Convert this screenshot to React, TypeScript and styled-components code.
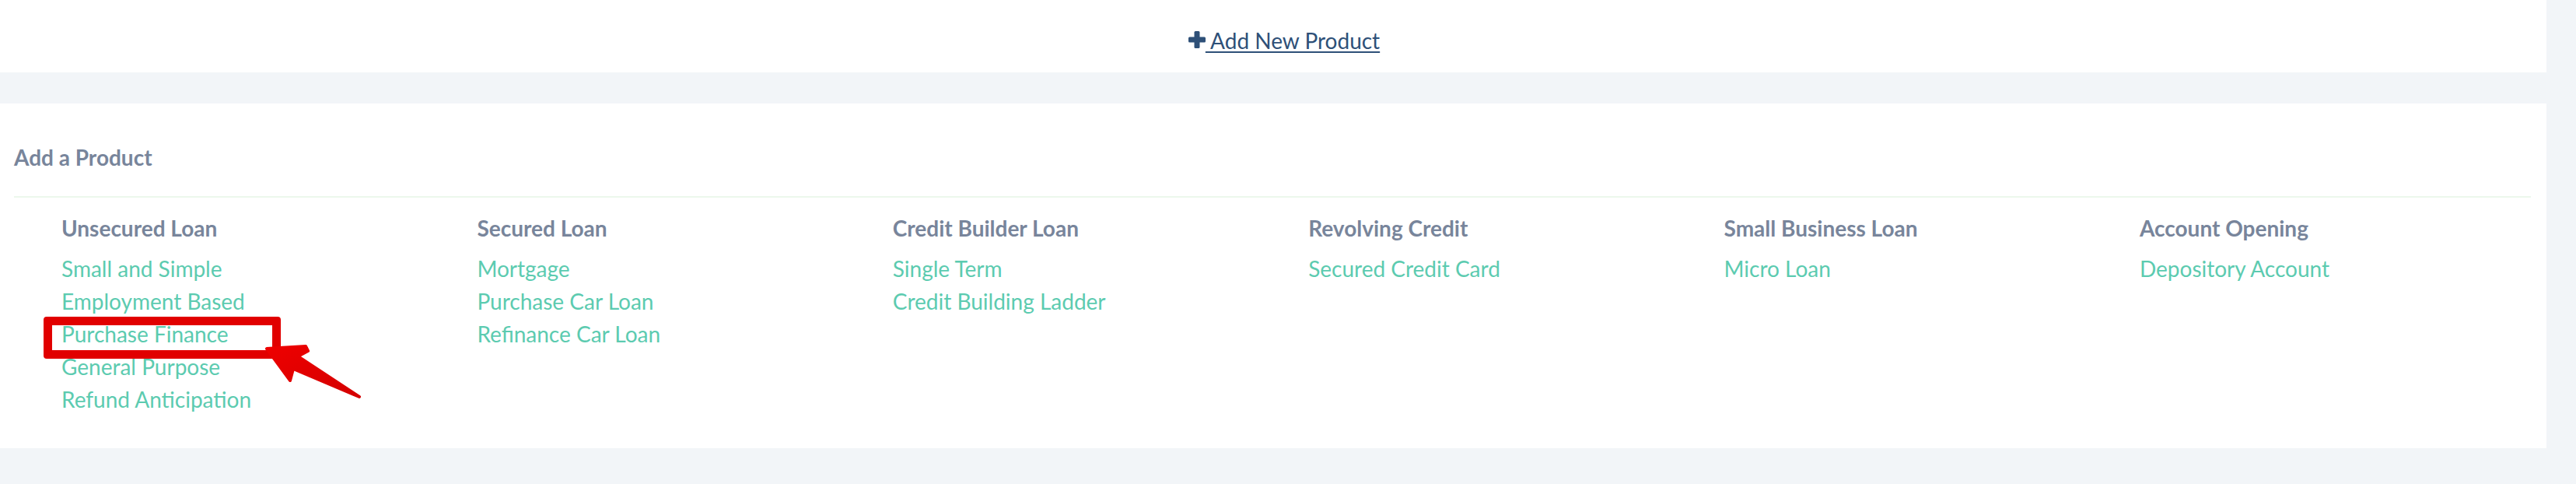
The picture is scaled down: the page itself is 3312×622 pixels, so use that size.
import React from "react";
import styled, { createGlobalStyle } from "styled-components";

const GlobalStyle = createGlobalStyle`
  html, body {
    margin: 0;
    padding: 0;
    background: #f2f5f8;
  }
  body {
    font-family: Lato, "Open Sans", Arial, sans-serif;
    -webkit-font-smoothing: antialiased;
  }
`;

const Page = styled.div`
  display: flex;
  flex-direction: column;
  gap: 40px;
  width: calc(100% - 38px);
  min-height: 622px;
`;

const TopBar = styled.div`
  background: #ffffff;
  height: 93px;
  display: flex;
  align-items: center;
  justify-content: center;
  padding-left: 28px;
  padding-top: 10px;
  box-sizing: border-box;
`;

const AddLink = styled.a`
  color: #2e5078;
  font-size: 28px;
  line-height: 42px;
  text-decoration: underline;
  text-decoration-thickness: 2px;
  text-underline-offset: 3px;
  cursor: pointer;
  white-space: pre;
  display: inline-flex;
  align-items: center;
`;

const PlusIcon = styled.svg`
  width: 22px;
  height: 22px;
  flex: none;
  margin-top: -2px;
`;

const Panel = styled.section`
  background: #ffffff;
  padding: 48px 20px 42px 18px;
`;

const Title = styled.h2`
  margin: 0;
  font-size: 28px;
  line-height: 42px;
  font-weight: 700;
  color: #78859b;
`;

const Divider = styled.hr`
  margin: 29px 0 18px 0;
  border: 0;
  height: 2px;
  background: #ecf8ec;
`;

const Columns = styled.div`
  display: grid;
  grid-template-columns: repeat(6, 534.4px);
  padding-left: 61px;
`;

const Column = styled.div`
  display: flex;
  flex-direction: column;
`;

const ColumnTitle = styled.h3`
  margin: 0 0 10px 0;
  font-size: 28px;
  line-height: 42px;
  font-weight: 700;
  color: #78859b;
`;

const ItemList = styled.ul`
  list-style: none;
  margin: 0;
  padding: 0;
`;

const Item = styled.li<{ $marked?: boolean }>`
  position: relative;
  font-size: 28px;
  line-height: 42px;
  color: #5ccbb0;
  cursor: pointer;
  white-space: nowrap;
`;

const HighlightBox = styled.span`
  position: absolute;
  left: -23px;
  top: -1px;
  width: 305px;
  height: 54px;
  box-sizing: border-box;
  border: 11px solid #e10000;
  border-radius: 4px;
  pointer-events: none;
`;

const Arrow = styled.svg`
  position: absolute;
  left: 257px;
  top: 29px;
  width: 132px;
  height: 80px;
  overflow: visible;
  pointer-events: none;
`;

const groups: { title: string; items: string[] }[] = [
  {
    title: "Unsecured Loan",
    items: [
      "Small and Simple",
      "Employment Based",
      "Purchase Finance",
      "General Purpose",
      "Refund Anticipation",
    ],
  },
  {
    title: "Secured Loan",
    items: ["Mortgage", "Purchase Car Loan", "Refinance Car Loan"],
  },
  {
    title: "Credit Builder Loan",
    items: ["Single Term", "Credit Building Ladder"],
  },
  { title: "Revolving Credit", items: ["Secured Credit Card"] },
  { title: "Small Business Loan", items: ["Micro Loan"] },
  { title: "Account Opening", items: ["Depository Account"] },
];

export default function App() {
  return (
    <>
      <GlobalStyle />
      <Page>
        <TopBar>
          <AddLink>
            <PlusIcon viewBox="0 0 22 22">
              <rect x="7.5" y="0" width="7" height="22" rx="1.5" fill="#2e5078" />
              <rect x="0" y="7.5" width="22" height="7" rx="1.5" fill="#2e5078" />
            </PlusIcon>
            {" Add New Product"}
          </AddLink>
        </TopBar>
        <Panel>
          <Title>Add a Product</Title>
          <Divider />
          <Columns>
            {groups.map((g) => (
              <Column key={g.title}>
                <ColumnTitle>{g.title}</ColumnTitle>
                <ItemList>
                  {g.items.map((it) => (
                    <Item key={it}>
                      {it}
                      {it === "Purchase Finance" && (
                        <>
                          <HighlightBox />
                          <Arrow viewBox="0 0 132 80">
                            <defs>
                              <linearGradient id="arrowGrad" x1="0" y1="0" x2="1" y2="1">
                                <stop offset="0" stopColor="#ee0000" />
                                <stop offset="1" stopColor="#d40000" />
                              </linearGradient>
                            </defs>
                            <polygon
                              points="7,11 57,8 60,14 47,21 126,73 41,37 37,52"
                              fill="url(#arrowGrad)"
                              stroke="url(#arrowGrad)"
                              strokeWidth="4"
                              strokeLinejoin="round"
                            />
                          </Arrow>
                        </>
                      )}
                    </Item>
                  ))}
                </ItemList>
              </Column>
            ))}
          </Columns>
        </Panel>
      </Page>
    </>
  );
}
